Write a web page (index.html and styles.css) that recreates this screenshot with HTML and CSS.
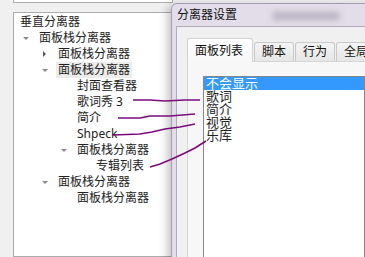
FILE: index.html
```html
<!DOCTYPE html>
<html>
	<head>
		<meta charset="UTF-8">
		<link rel="stylesheet" href="styles.css">
	</head>
	<body>
		<div class="screen">
			<div class="left">
				<div class="prev-box"></div>
				<div class="tree">
					<div class="row l0"><span class="label">垂直分离器</span></div>
					<div class="row l1"><span class="tw open"></span><span class="label">面板栈分离器</span></div>
					<div class="row l2"><span class="tw shut"></span><span class="label">面板栈分离器</span></div>
					<div class="row l2"><span class="tw open"></span><span class="label hot">面板栈分离器</span></div>
					<div class="row l3"><span class="label">封面查看器</span></div>
					<div class="row l3"><span class="label">歌词秀 3</span></div>
					<div class="row l3"><span class="label">简介</span></div>
					<div class="row l3"><span class="label">Shpeck</span></div>
					<div class="row l3"><span class="tw open"></span><span class="label">面板栈分离器</span></div>
					<div class="row l4"><span class="label">专辑列表</span></div>
					<div class="row l2"><span class="tw open"></span><span class="label">面板栈分离器</span></div>
					<div class="row l3"><span class="label">面板栈分离器</span></div>
				</div>
			</div>

			<div class="dialog">
				<div class="titlebar">分离器设置<span class="blur"></span></div>
				<div class="client">
					<div class="tabs">
						<div class="tab active">面板列表</div>
						<div class="tab">脚本</div>
						<div class="tab">行为</div>
						<div class="tab">全局</div>
					</div>
					<div class="page">
						<ul class="listbox">
							<li class="sel">不会显示</li>
							<li>歌词</li>
							<li>简介</li>
							<li>视觉</li>
							<li>乐库</li>
						</ul>
					</div>
				</div>
			</div>

			<svg class="marks" width="365" height="257" viewBox="0 0 365 257">
				<polyline points="133,100 150,100 165,101 185,100 200,100"/>
				<polyline points="118,118 140,118 150,116 170,116 195,114"/>
				<polyline points="113,135 140,134 152,132 165,129 180,127 195,124"/>
				<polyline points="150,167 160,164 172,159 185,153 195,148 206,141"/>
			</svg>
		</div>
	</body>
</html>
```

FILE: styles.css
```css
* {
	box-sizing: border-box;
	font-family: "Noto Sans", "Noto Sans CJK SC", sans-serif;
}
html, body {
	margin: 0;
	padding: 0;
}

.screen {
	background: #f0f0f0;
	height: 257px;
	overflow: hidden;
	position: relative;
	width: 365px;
}

/* tree side */
.left {
	display: flex;
	flex-direction: column;
	height: 100%;
	padding-left: 13px;
}
.prev-box {
	background: #fff;
	border: 1px solid #adadad;
	border-top: none;
	height: 3px;
	width: 160px;
}
.tree {
	background: #fff;
	border: 1px solid #adadad;
	flex: 1;
	margin-top: 9px;
	padding-top: 1px;
	width: 160px;
}
.row {
	align-items: center;
	color: #222;
	display: flex;
	font-size: 12px;
	height: 16px;
	line-height: 16px;
	white-space: nowrap;
}
.l0 { padding-left: 4px; }
.l1 { padding-left: 23px; }
.l2 { padding-left: 42px; }
.l3 { padding-left: 61px; }
.l4 { padding-left: 80px; }
.label {
	padding: 0 2px;
}
.hot {
	background: #ececec;
}
.tw {
	align-items: center;
	display: flex;
	height: 16px;
	margin-left: -20px;
	padding-left: 6px;
	width: 20px;
}
.tw::before {
	content: "";
	display: block;
}
.open::before {
	border-left: 3px solid transparent;
	border-right: 3px solid transparent;
	border-top: 3px solid #8a8a8a;
}
.shut::before {
	border-bottom: 3px solid transparent;
	border-left: 3px solid #5a5a5a;
	border-top: 3px solid transparent;
	margin-left: 1px;
}

/* settings window */
.dialog {
	background: #e3dde9;
	border: 1px solid #a49bb1;
	border-radius: 6px 0 0 0;
	bottom: -20px;
	box-shadow: -4px 2px 9px rgba(0, 0, 0, 0.22);
	display: flex;
	flex-direction: column;
	left: 171px;
	padding-left: 4px;
	position: absolute;
	right: -40px;
	top: 3px;
}
.titlebar {
	color: #111;
	font-size: 12px;
	height: 24px;
	line-height: 21px;
	padding-left: 1px;
	position: relative;
}
.blur {
	background: #aaa3b4;
	border-radius: 6px;
	filter: blur(3px);
	height: 8px;
	left: 96px;
	opacity: 0.75;
	position: absolute;
	top: 8px;
	width: 68px;
}
.client {
	background: #f0f0f0;
	border-left: 1px solid #b2abbd;
	border-top: 1px solid #b2abbd;
	display: flex;
	flex: 1;
	flex-direction: column;
	padding: 11px 0 0 10px;
}

.tabs {
	align-items: flex-end;
	display: flex;
	height: 23px;
	white-space: nowrap;
}
.tab {
	background: linear-gradient(#f4f4f4, #e6e6e6);
	border: 1px solid #c9c9c9;
	border-bottom: none;
	border-radius: 3px 3px 0 0;
	color: #111;
	font-size: 12px;
	height: 19px;
	line-height: 18px;
	margin-left: 1px;
	padding: 0 7px;
}
.tab.active {
	background: linear-gradient(#fdfdfd, #f7f7f7);
	border-color: #d4d4d4;
	height: 24px;
	line-height: 24px;
	margin-bottom: -1px;
	margin-left: 0;
	padding: 0 7px;
	position: relative;
	width: 66px;
}
.page {
	background: #f7f7f7;
	border-left: 1px solid #d6d6d6;
	border-top: 1px solid #d6d6d6;
	flex: 1;
	padding: 14px 0 0 15px;
}
.listbox {
	background: #fff;
	border: 1px solid #828790;
	height: 200px;
	list-style: none;
	margin: 0;
	padding: 0;
	width: 162px;
}
.listbox li {
	color: #222;
	font-size: 13px;
	height: 13px;
	line-height: 13px;
	padding-left: 2px;
}
.listbox li.sel {
	background: #3399ff;
	color: #fff;
}

/* hand-drawn marks */
.marks {
	left: 0;
	pointer-events: none;
	position: absolute;
	top: 0;
}
.marks polyline {
	fill: none;
	stroke: #7d0a7d;
	stroke-width: 1.6;
}
```
